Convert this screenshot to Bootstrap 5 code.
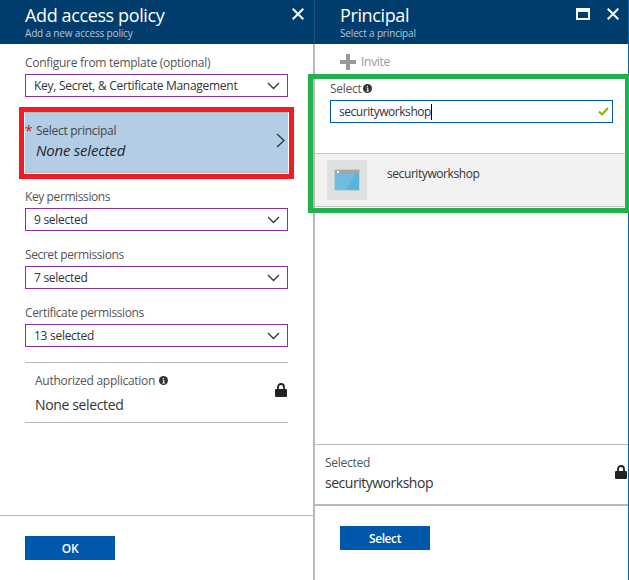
<!DOCTYPE html>
<html lang="en">
<head>
<meta charset="utf-8">
<meta name="viewport" content="width=device-width, initial-scale=1">
<title>Add access policy</title>
<link href="https://cdn.jsdelivr.net/npm/bootstrap@5.3.0/dist/css/bootstrap.min.css" rel="stylesheet">
<style>
  body { font-family: "Open Sans", "Noto Sans", sans-serif; font-size: 12px; line-height: 16px; letter-spacing: -.28px; color: #333; height: 580px; overflow: hidden; }
  svg { display: block; flex: none; }
  .blade-left { width: 315px; border-right: 2px solid #b9b9b9; }
  .blade-right { width: 314px; border-right: 1px solid #0a64ad; }
  .blade-head { height: 44px; background: #003c6c; color: #fff; padding: 4px 9px 0 25px; }
  .blade-left .blade-head { margin-right: -2px; padding-right: 10px; border-right: 1px solid #1c5483; }
  .blade-title { font-size: 18px; line-height: 22px; letter-spacing: -.38px; margin: 0; font-weight: 400; }
  .blade-sub { font-size: 10px; line-height: 14px; letter-spacing: -.16px; color: #b5c6d5; }
  .blade-body { padding: 11px 25px 0; }
  .field-label { color: #555; height: 19px; }
  .tight { letter-spacing: -.4px; }
  .picker { height: 23px; border: 1px solid #8e2da8; padding: 0 7px 0 8px; }
  .gap-field { margin-bottom: 16px; }
  .mark-red { border: 5px solid #ee1c25; margin: 10px -6px 10px; height: 72px; padding: 0 1px 1px; }
  .principal-tile { background: #b3cde6; border-top: 1px solid #b5b9bc; border-bottom: 1px solid #b5b9bc; padding: 0 3px 0 0; }
  .principal-text { padding-top: 10px; color: #444; }
  .principal-value { font-size: 15px; line-height: 22px; letter-spacing: -.23px; color: #252525; }
  .principal-arrow { margin-top: -4px; }
  .star { color: #e00b1c; width: 11px; padding-top: 9px; font-size: 14px; line-height: 18px; }
  .value-lg { font-size: 14px; line-height: 18px; letter-spacing: -.36px; }
  .auth-row { margin-top: 15px; height: 61px; border-top: 1px solid #b9b9b9; border-bottom: 1px solid #b9b9b9; padding: 10px 1px 0 10px; }
  .lock { margin-top: 10px; }
  .foot-left { height: 65px; border-top: 1px solid #b9b9b9; padding: 20px 25px 0; }
  .foot-right { height: 76px; border-top: 2px solid #b9b9b9; padding: 20px 25px 0; }
  .btn-blade { --bs-btn-bg: #0058ad; --bs-btn-color: #fff; --bs-btn-border-radius: 0; width: 90px; height: 24px; padding: 2px 0 0; border: 0; font-size: 12px; line-height: 22px; font-weight: 600; letter-spacing: -.4px; }
  .invite-bar { height: 30px; padding: 6px 0 0 25px; gap: 5px; color: #999; }
  .head-icons { gap: 17px; }
  .mark-green { border: 5px solid #22b14c; border-right-width: 4px; margin-left: -7px; margin-right: -1px; height: 139px; position: relative; }
  .mark-green::before { content: ""; position: absolute; left: 0; top: 0; bottom: 0; width: 2px; background: #b9b9b9; }
  .search-label { padding: 0 0 2px 17px; height: 21px; gap: 2px; color: #555; }
  .search-box { height: 23px; border: 1px solid #0058ad; margin: 0 12px 0 17px; padding: 0 3px 0 8px; letter-spacing: -.45px; }
  .caret { width: 1px; height: 16px; background: #000; }
  .result { margin: 30px 0 0 2px; height: 54px; background: #f2f2f2; border-top: 1px solid #c8c8c8; border-bottom: 1px solid #c8c8c8; padding: 6px 0 0 12px; }
  .result-name { margin: 6px 0 0 20px; letter-spacing: -.42px; }
  .selected-row { height: 60px; border-top: 1px solid #b9b9b9; padding: 10px 1px 0 10px; }
  .selected-row .value-lg { letter-spacing: -.48px; }
</style>
</head>
<body class="bg-white">
<div class="d-flex h-100">
  <section class="blade-left d-flex flex-column">
    <header class="blade-head d-flex justify-content-between">
      <div><h1 class="blade-title">Add access policy</h1><div class="blade-sub">Add a new access policy</div></div>
      <svg class="mt-1" width="12" height="12" viewBox="0 0 12 12" stroke="#fff" stroke-width="2"><path d="M.7.7l10.6 10.6M11.3.7L.7 11.3"/></svg>
    </header>
    <div class="blade-body flex-grow-1">
      <div class="field-label">Configure from template (optional)</div>
      <div class="picker d-flex align-items-center justify-content-between"><span>Key, Secret, &amp; Certificate Management</span>
        <svg width="13" height="8" viewBox="0 0 13 8" fill="none" stroke="#333" stroke-width="1.3"><path d="M1 1l5.5 5.5L12 1"/></svg></div>
      <div class="mark-red">
        <div class="principal-tile h-100 d-flex justify-content-between align-items-start">
          <div class="d-flex">
            <div class="star">*</div>
            <div class="principal-text"><div>Select principal</div><div class="principal-value fst-italic">None selected</div></div>
          </div>
          <svg class="principal-arrow align-self-center" width="9" height="15" viewBox="0 0 9 15" fill="none" stroke="#333" stroke-width="1.3"><path d="M1 1l7 6.5L1 14"/></svg>
        </div>
      </div>
      <div class="field-label tight">Key permissions</div>
      <div class="picker gap-field d-flex align-items-center justify-content-between"><span>9 selected</span>
        <svg width="13" height="8" viewBox="0 0 13 8" fill="none" stroke="#333" stroke-width="1.3"><path d="M1 1l5.5 5.5L12 1"/></svg></div>
      <div class="field-label tight">Secret permissions</div>
      <div class="picker gap-field d-flex align-items-center justify-content-between"><span>7 selected</span>
        <svg width="13" height="8" viewBox="0 0 13 8" fill="none" stroke="#333" stroke-width="1.3"><path d="M1 1l5.5 5.5L12 1"/></svg></div>
      <div class="field-label tight">Certificate permissions</div>
      <div class="picker d-flex align-items-center justify-content-between"><span>13 selected</span>
        <svg width="13" height="8" viewBox="0 0 13 8" fill="none" stroke="#333" stroke-width="1.3"><path d="M1 1l5.5 5.5L12 1"/></svg></div>
      <div class="auth-row d-flex justify-content-between">
        <div>
          <div class="d-flex align-items-center gap-1 field-label pb-1"><span>Authorized application</span>
            <svg width="9" height="9" viewBox="0 0 9 9"><circle cx="4.5" cy="4.5" r="4.5" fill="#333"/><path d="M3.7 4h1.1v3M3.3 7h2.6M3.8 2.3h1.2" stroke="#fff" stroke-width="1" fill="none"/></svg></div>
          <div class="value-lg pt-1">None selected</div>
        </div>
        <svg class="lock" width="12" height="14" viewBox="0 0 12 14"><path d="M3 7V4.2a3 3.2 0 0 1 6 0V7" fill="none" stroke="#222" stroke-width="1.8"/><rect y="6" width="12" height="8" rx="1" fill="#222"/></svg>
      </div>
    </div>
    <footer class="foot-left"><button class="btn btn-blade">OK</button></footer>
  </section>
  <section class="blade-right d-flex flex-column">
    <header class="blade-head d-flex justify-content-between">
      <div><h2 class="blade-title">Principal</h2><div class="blade-sub">Select a principal</div></div>
      <div class="head-icons d-flex mt-1">
        <svg width="14" height="12" viewBox="0 0 14 12"><path d="M0 0h14v12H0zM2 4v6h10V4z" fill="#fff" fill-rule="evenodd"/></svg>
        <svg width="12" height="12" viewBox="0 0 12 12" stroke="#fff" stroke-width="2"><path d="M.7.7l10.6 10.6M11.3.7L.7 11.3"/></svg>
      </div>
    </header>
    <div class="invite-bar d-flex align-items-center">
      <svg width="16" height="16" viewBox="0 0 16 16"><path d="M6 0h4v6h6v4h-6v6H6v-6H0V6h6z" fill="#999"/></svg><span>Invite</span>
    </div>
    <div class="mark-green">
      <div class="search-label d-flex align-items-center"><span>Select</span>
        <svg width="9" height="9" viewBox="0 0 9 9"><circle cx="4.5" cy="4.5" r="4.5" fill="#333"/><path d="M3.7 4h1.1v3M3.3 7h2.6M3.8 2.3h1.2" stroke="#fff" stroke-width="1" fill="none"/></svg></div>
      <div class="search-box d-flex align-items-center"><span>securityworkshop</span><span class="caret"></span>
        <svg class="ms-auto" width="11" height="9" viewBox="0 0 11 9" fill="none" stroke="#7fba00" stroke-width="2"><path d="M1 4.5l3 3L10 1"/></svg></div>
      <div class="result d-flex">
        <svg width="40" height="40" viewBox="0 0 40 40"><path fill="#dfe1e1" d="M0 0h40v40H0z"/><rect x="7" y="9" width="26" height="22" rx="1" fill="#bcd3dc"/><path fill="#a2a6a7" d="M8 10h24v4H8z"/><path fill="#59b4d9" d="M8 14h24v16H8z"/><path fill="#70bddf" d="M8 14h20l-9 16H8z"/><circle cx="11" cy="12" r="1.2" fill="#fff"/></svg>
        <span class="result-name">securityworkshop</span>
      </div>
    </div>
    <div class="flex-grow-1"></div>
    <div class="selected-row d-flex justify-content-between">
      <div><div class="field-label">Selected</div><div class="value-lg">securityworkshop</div></div>
      <svg class="lock" width="12" height="14" viewBox="0 0 12 14"><path d="M3 7V4.2a3 3.2 0 0 1 6 0V7" fill="none" stroke="#222" stroke-width="1.8"/><rect y="6" width="12" height="8" rx="1" fill="#222"/></svg>
    </div>
    <footer class="foot-right"><button class="btn btn-blade">Select</button></footer>
  </section>
</div>
<script src="https://cdn.jsdelivr.net/npm/bootstrap@5.3.0/dist/js/bootstrap.bundle.min.js"></script>
</body>
</html>
